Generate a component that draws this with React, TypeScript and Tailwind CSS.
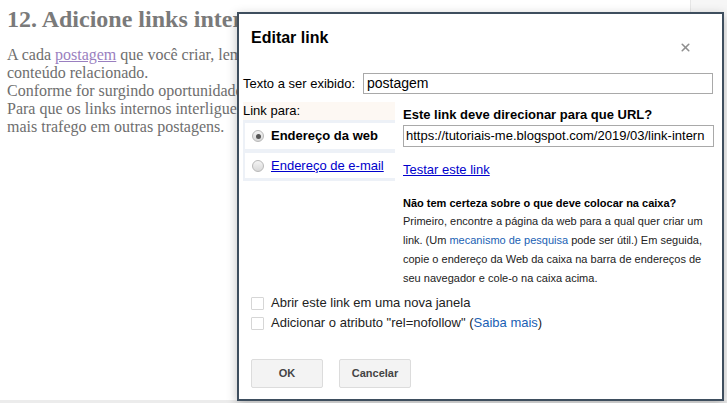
import { X } from "lucide-react";

const Radio = ({ checked }: { checked?: boolean }) => (
  <span className="flex h-[12px] w-[12px] shrink-0 items-center justify-center rounded-full border border-[#b8b8b8] bg-gradient-to-b from-[#f4f4f4] to-[#d8d8d8]">
    {checked && <span className="h-[5px] w-[5px] rounded-full bg-[#555]" />}
  </span>
);

const Checkbox = () => (
  <span className="h-[13px] w-[13px] shrink-0 rounded-[1px] border border-[#d6d6d6] bg-white" />
);

const EditLinkDialog = () => {
  return (
    <div className="absolute left-[237px] top-[12px] h-[389px] w-[487px] border-2 border-[#3e4e5e] bg-white shadow-[0_3px_10px_rgba(0,0,0,0.25)] font-['Liberation_Sans',Arial,sans-serif] text-[#222]">
      <div className="flex items-start justify-between pl-[12px] pr-[30px] pt-[14px]">
        <h2 className="text-[16px] font-bold leading-[20px] text-black">Editar link</h2>
        <X className="mt-[13px] h-[13px] w-[13px] text-[#8f8f8f]" strokeWidth={3} />
      </div>

      <div className="mt-[19px] flex items-center pl-[4px]">
        <span className="w-[120px] text-[13px] text-black">Texto a ser exibido:</span>
        <div className="flex h-[21px] w-[350px] items-center border border-[#a9a9a9] px-[3px] text-[14px] text-black">
          postagem
        </div>
      </div>

      <div className="mt-[8px] flex">
        <div className="ml-[4px] w-[152px]">
          <div className="h-[18px] bg-[#fdf8f3] text-[13px] leading-[18px] text-black">Link para:</div>
          <div className="flex flex-col gap-[4px] bg-[#edf1f7] py-[3px] pl-[2px]">
            <div className="flex h-[26px] items-center gap-[7px] bg-white pl-[7px] text-[13px] font-bold text-black">
              <Radio checked />
              Endereço da web
            </div>
            <div className="flex h-[25px] items-center gap-[7px] bg-white pl-[7px] text-[13px] text-[#00c] underline">
              <Radio />
              Endereço de e-mail
            </div>
          </div>
        </div>

        <div className="ml-[8px] flex w-[311px] flex-col">
          <div className="mt-[5px] text-[13px] font-bold leading-[16px] text-black">
            Este link deve direcionar para que URL?
          </div>
          <div className="mt-[2px] flex h-[22px] items-center overflow-hidden whitespace-nowrap border border-[#a9a9a9] px-[2px] text-[13px] text-black">
            https://tutoriais-me.blogspot.com/2019/03/link-intern
          </div>
          <a className="mt-[15px] text-[13px] leading-[16px] text-[#00c] underline">Testar este link</a>

          <div className="mt-[17px] text-[11px] font-bold leading-[16px] text-black">
            Não tem certeza sobre o que deve colocar na caixa?
          </div>
          <p className="mt-[1px] text-[11px] leading-[19px] text-[#222]">
            Primeiro, encontre a página da web para a qual quer criar um link. (Um{" "}
            <a className="text-[#1a5fb4]">mecanismo de pesquisa</a> pode ser útil.) Em seguida,
            copie o endereço da Web da caixa na barra de endereços de seu navegador e cole-o na
            caixa acima.
          </p>
        </div>
      </div>

      <div className="mt-[7px] flex flex-col gap-[4px] pl-[12px] text-[13px] leading-[16px] text-[#222]">
        <label className="flex items-center gap-[7px]">
          <Checkbox />
          Abrir este link em uma nova janela
        </label>
        <label className="flex items-center gap-[7px]">
          <Checkbox />
          <span>
            Adicionar o atributo "rel=nofollow" (<a className="text-[#1a5fb4]">Saiba mais</a>)
          </span>
        </label>
      </div>

      <div className="mt-[28px] flex gap-[16px] pl-[12px]">
        <button className="h-[29px] w-[72px] rounded-[2px] border border-[#dcdcdc] bg-[#f3f3f3] text-[11px] font-bold text-[#444]">
          OK
        </button>
        <button className="h-[29px] w-[72px] rounded-[2px] border border-[#dcdcdc] bg-[#f3f3f3] text-[11px] font-bold text-[#444]">
          Cancelar
        </button>
      </div>
    </div>
  );
};

export default function App() {
  return (
    <div className="relative flex h-[403px] w-[727px] overflow-hidden bg-white">
      <div className="w-[690px] px-[7px] pt-[4px] font-['Liberation_Serif','Times_New_Roman',serif] text-[#777]">
        <h1 className="text-[24px] font-bold leading-[30px] text-[#7a7a7a]">12. Adicione links internos:</h1>
        <p className="mt-[12px] text-[16px] leading-[18px] text-[#6e6e6e]">
          A cada <a className="text-[#9a7fc0] underline">postagem</a> que você criar, lembre-se de linkar para um
          <br />
          conteúdo relacionado.
          <br />
          Conforme for surgindo oportunidades, crie links internos.
          <br />
          Para que os links internos interliguem suas postagens e gerem
          <br />
          mais trafego em outras postagens.
        </p>
      </div>
      <div className="flex-1 border-l border-[#e6e6e6] bg-[#f6f6f6]" />
      <div className="absolute bottom-0 left-0 right-0 h-[3px] bg-[#ececec]" />
      <EditLinkDialog />
    </div>
  );
}
